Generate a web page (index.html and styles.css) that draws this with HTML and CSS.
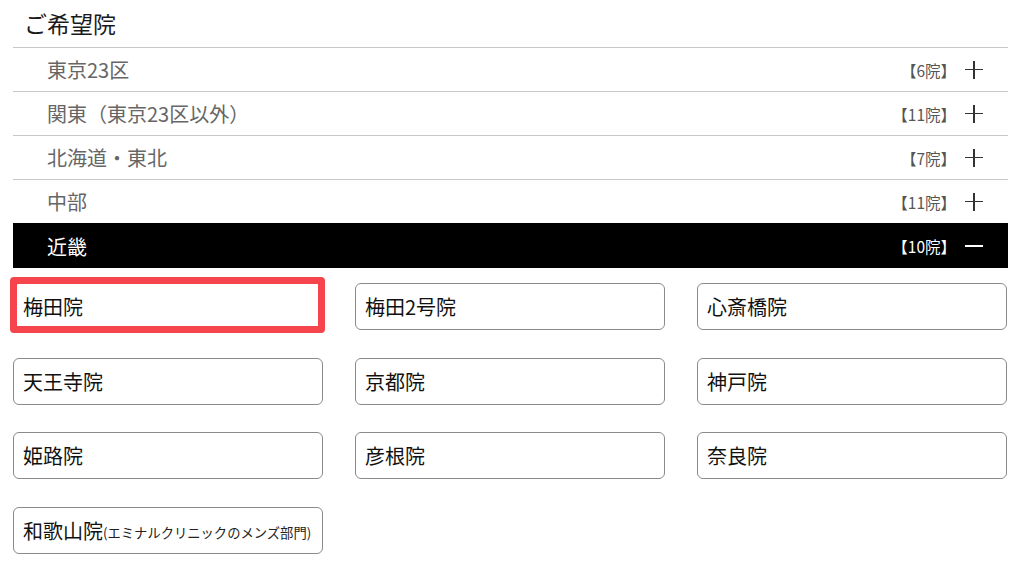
FILE: index.html
```html
<!DOCTYPE html>
<html lang="ja">
<head>
<meta charset="utf-8">
<link rel="stylesheet" href="styles.css">
</head>
<body>
<div class="wrap">
  <div class="title">ご希望院</div>
  <div class="area">
    <div class="row"><span class="name">東京23区</span><span class="right"><span class="count">【6院】</span><span class="plus"></span></span></div>
    <div class="row"><span class="name">関東（東京23区以外）</span><span class="right"><span class="count">【11院】</span><span class="plus"></span></span></div>
    <div class="row"><span class="name">北海道・東北</span><span class="right"><span class="count">【7院】</span><span class="plus"></span></span></div>
    <div class="row"><span class="name">中部</span><span class="right"><span class="count">【11院】</span><span class="plus"></span></span></div>
    <div class="row open"><span class="name">近畿</span><span class="right"><span class="count">【10院】</span><span class="minus"></span></span></div>
  </div>
  <div class="grid">
    <div class="btn marked">梅田院</div>
    <div class="btn">梅田2号院</div>
    <div class="btn">心斎橋院</div>
    <div class="btn">天王寺院</div>
    <div class="btn">京都院</div>
    <div class="btn">神戸院</div>
    <div class="btn">姫路院</div>
    <div class="btn">彦根院</div>
    <div class="btn">奈良院</div>
    <div class="btn">和歌山院<small class="sub">(エミナルクリニックのメンズ部門)</small></div>
  </div>
</div>
</body>
</html>
```

FILE: styles.css
```css
html, body {
  margin: 0;
  padding: 0;
  background: #fff;
}
body {
  font-family: "Noto Sans CJK JP", "Noto Sans", sans-serif;
  color: #222;
}
.wrap {
  width: 995px;
  margin-left: 13px;
}
.title {
  height: 47px;
  display: flex;
  align-items: center;
  padding-left: 11px;
  font-size: 23px;
  color: #1a1a1a;
  box-sizing: border-box;
  padding-bottom: 2px;
}
.row {
  height: 44px;
  box-sizing: border-box;
  border-top: 1px solid #c8c8c8;
  display: flex;
  align-items: center;
  justify-content: space-between;
  padding-left: 34px;
  padding-right: 25px;
  color: #666;
}
.name {
  font-size: 20px;
}
.right {
  display: flex;
  align-items: center;
}
.count {
  font-size: 15.5px;
  color: #555;
  margin-right: 9px;
}
.plus, .minus {
  position: relative;
  width: 18px;
  height: 18px;
  display: inline-block;
}
.plus::before, .minus::before {
  content: "";
  position: absolute;
  left: 0;
  right: 0;
  top: 8px;
  height: 1.5px;
  background: #333;
}
.plus::after {
  content: "";
  position: absolute;
  top: 0;
  bottom: 0;
  left: 8px;
  width: 1.5px;
  background: #333;
}
.row.open {
  height: 45px;
  background: #000;
  border-top: 1px solid #000;
  color: #fff;
}
.row.open .count {
  color: #fff;
}
.row.open .minus::before {
  background: #fff;
}
.grid {
  margin-top: 15px;
  width: 994px;
  display: grid;
  grid-template-columns: repeat(3, 310px);
  column-gap: 32px;
  row-gap: 27.5px;
}
.btn {
  position: relative;
  height: 47px;
  box-sizing: border-box;
  border: 1px solid #8a8a8a;
  border-radius: 6px;
  display: flex;
  align-items: center;
  padding-left: 9px;
  font-size: 20px;
  color: #111;
}
.sub {
  font-size: 13.3px;
  color: #222;
  margin-top: 4px;
}
.marked::after {
  content: "";
  position: absolute;
  left: -4px;
  top: -7px;
  right: -3px;
  bottom: -4px;
  border: 7px solid #f5444b;
  border-radius: 4px;
}
```
